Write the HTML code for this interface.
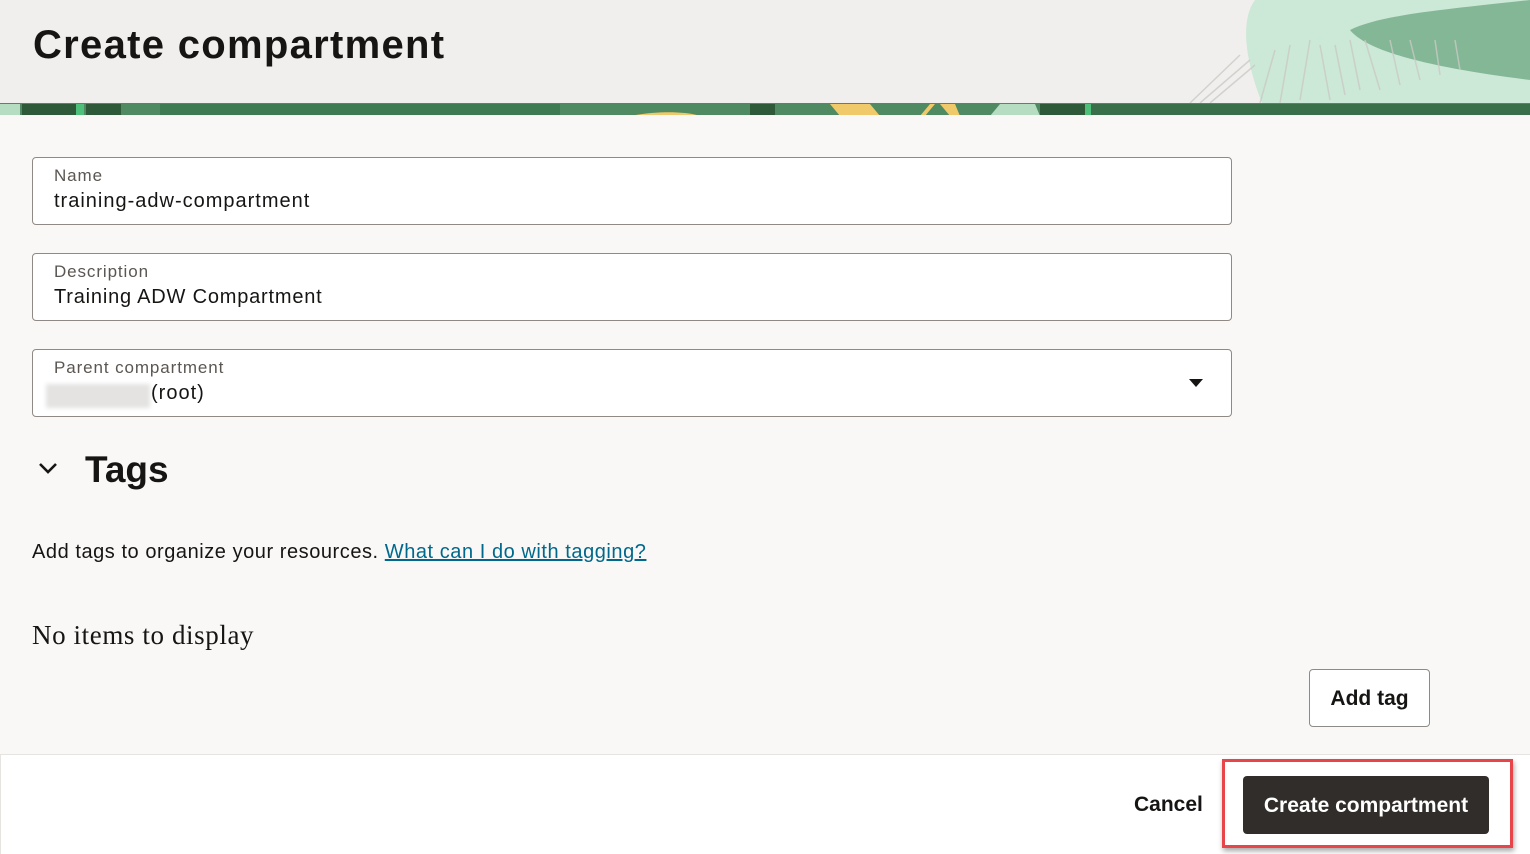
<!DOCTYPE html>
<html><head><style>
*{box-sizing:border-box;margin:0;padding:0}
body{width:1530px;height:854px;overflow:hidden;background:#f9f8f6;font-family:"Liberation Sans",sans-serif;color:#161513;position:relative}
.hdr{position:absolute;left:0;top:0;width:1530px;height:103px;background:#f0efed;overflow:hidden}
.band{position:absolute;left:0;top:103px;width:1530px;height:12px;background:#4f8a62;overflow:hidden}
h1{position:absolute;left:33px;top:23px;font-size:40px;font-weight:bold;letter-spacing:1.3px}
.f{position:absolute;left:32px;width:1200px;height:68px;border:1px solid #8f8a85;border-radius:4px;background:#fff}
.f .l{position:absolute;left:21px;top:8px;font-size:17px;color:#5b5652;letter-spacing:0.9px}
.f .v{position:absolute;left:21px;top:32px;font-size:20px;color:#161513;letter-spacing:1px}
</style></head><body>
<div class="hdr">
<svg width="1530" height="103" style="position:absolute;left:0;top:0">
<path d="M1255 0 L1530 0 L1530 103 L1262 103 C1245 60 1240 20 1255 0Z" fill="#cce8d6"/>
<path d="M1350 30 C1380 15 1440 10 1530 0 L1530 80 C1450 70 1370 55 1350 30Z" fill="#84b796"/>
<g stroke="#c9c9c4" stroke-width="1.5" fill="none" opacity="0.8">
<path d="M1190 103 L1240 55 M1200 103 L1250 60 M1210 103 L1255 65 M1260 103 L1275 50 M1280 103 L1290 45 M1300 100 L1310 40 M1330 100 L1320 45 M1345 95 L1335 45 M1360 90 L1350 40 M1380 90 L1365 40 M1400 85 L1390 40 M1420 80 L1410 40 M1440 75 L1435 40 M1460 70 L1455 40"/>
</g></svg>
<h1>Create compartment</h1>
</div>
<div class="band">
<svg width="1530" height="12">
<rect x="0" y="0" width="20" height="12" fill="#b6dcc2"/>
<rect x="22" y="0" width="55" height="12" fill="#2f5a3a"/>
<rect x="76" y="0" width="8" height="12" fill="#4fc07a"/>
<rect x="86" y="0" width="35" height="12" fill="#2f5a3a"/>
<rect x="160" y="0" width="400" height="12" fill="#3e7a52"/>
<path d="M630 12 C660 6 690 8 700 12Z" fill="#f0c96a"/>
<rect x="750" y="0" width="25" height="12" fill="#2f5a3a"/>
<path d="M830 0 L870 0 L880 12 L840 12Z" fill="#f0c96a"/>
<path d="M920 12 L930 0 L935 0 L925 12Z M940 0 L955 0 L960 12 L950 12Z" fill="#f0c96a"/>
<path d="M990 12 L1000 0 L1035 0 L1040 12Z" fill="#b6dcc2"/>
<rect x="1040" y="0" width="45" height="12" fill="#2f5a3a"/>
<rect x="1085" y="0" width="6" height="12" fill="#4fc07a"/>
<rect x="1091" y="0" width="440" height="12" fill="#3a7049"/>
</svg>
</div>
<div class="f" style="top:157px"><div class="l">Name</div><div class="v">training-adw-compartment</div></div>
<div class="f" style="top:253px"><div class="l">Description</div><div class="v" style="letter-spacing:0.8px">Training ADW Compartment</div></div>
<div class="f" style="top:349px"><div class="l">Parent compartment</div>
<div style="position:absolute;left:13px;top:34px;width:104px;height:24px;background:#e4e3e1;filter:blur(2px)"></div>
<div class="v" style="left:118px">(root)</div>
<svg style="position:absolute;left:1156px;top:29px" width="14" height="8"><path d="M0 0 L14 0 L7 8Z" fill="#161513"/></svg>
</div>
<svg style="position:absolute;left:38px;top:462px" width="20" height="13"><path d="M2 2 L10 10 L18 2" stroke="#161513" stroke-width="2.6" fill="none"/></svg>
<div style="position:absolute;left:85px;top:449px;font-size:37px;font-weight:bold">Tags</div>
<div style="position:absolute;left:32px;top:541px;font-size:20px;letter-spacing:0.55px">Add tags to organize your resources. <span style="color:#00688c;text-decoration:underline">What can I do with tagging?</span></div>
<div style="position:absolute;left:32px;top:620px;font-size:27px;font-family:'Liberation Serif',serif;letter-spacing:0.6px">No items to display</div>
<div style="position:absolute;left:1309px;top:669px;width:121px;height:58px;border:1px solid #8f8a85;border-radius:4px;background:#fff;font-size:21px;font-weight:bold;text-align:center;line-height:58px">Add tag</div>
<div style="position:absolute;left:0;top:754px;width:1530px;height:100px;background:#fff;border-top:1px solid #e6e4e1;border-left:1px solid #e6e4e1"></div>
<div style="position:absolute;left:1134px;top:793px;font-size:21px;font-weight:bold">Cancel</div>
<div style="position:absolute;left:1222px;top:759px;width:291px;height:89px;border:3px solid #e8454a;box-shadow:1px 3px 5px rgba(0,0,0,0.35)"></div>
<div style="position:absolute;left:1243px;top:776px;width:246px;height:58px;background:#312d2a;border-radius:4px;color:#fff;font-size:21px;font-weight:bold;text-align:center;line-height:60px">Create compartment</div>
</body></html>
